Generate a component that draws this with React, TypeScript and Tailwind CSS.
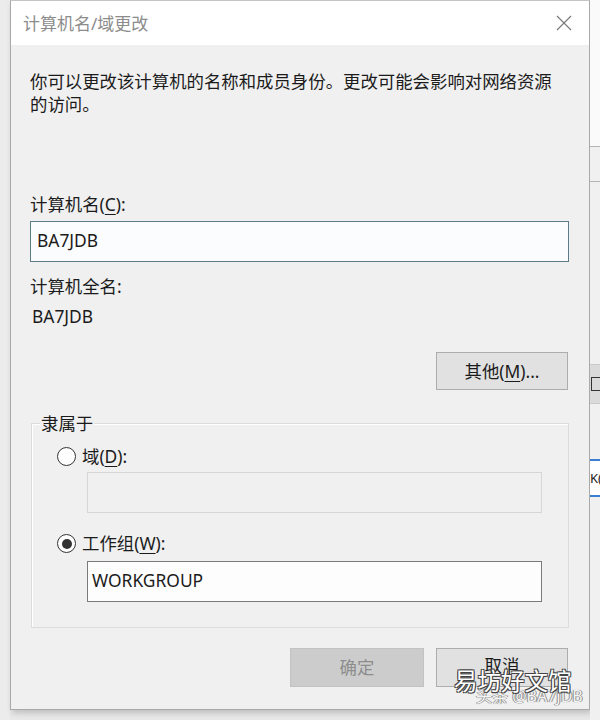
import React from 'react';

function Radio({ checked }: { checked?: boolean }) {
  return (
    <span className="w-[19px] h-[19px] rounded-full border-[1.5px] border-[#333333] bg-white flex items-center justify-center shrink-0">
      {checked && <span className="w-[10px] h-[10px] rounded-full bg-[#333333]" />}
    </span>
  );
}

export default function App() {
  return (
    <div className="relative w-[600px] h-[720px] overflow-hidden bg-[#e8e8e8] flex font-['Noto_Sans','Noto_Sans_CJK_SC',sans-serif] text-[#1b1b1b]">
      {/* left edge of the window behind */}
      <div className="w-[10px] shrink-0 bg-[#ececec]" />

      {/* dialog */}
      <div className="w-[580px] h-[710px] shrink-0 border border-[#a9a9a9] border-t-[#c4c4c4] bg-[#f0f0f0] shadow-[2px_3px_6px_rgba(0,0,0,0.18)] flex flex-col">
        {/* title bar */}
        <div className="h-[44px] bg-white flex items-center justify-between pl-[12px] pr-[17px]">
          <span className="text-[17px] leading-[23px] text-[#8c8c8c]">计算机名/域更改</span>
          <svg width="16" height="16" viewBox="0 0 16 16" className="text-[#777777]">
            <path d="M1 1 L15 15 M15 1 L1 15" stroke="currentColor" strokeWidth="1.1" fill="none" />
          </svg>
        </div>

        {/* body */}
        <div className="flex flex-col pl-[19px] pr-[20px] text-[17.4px] leading-[23px]">
          <p className="pt-[25px] whitespace-nowrap">
            你可以更改该计算机的名称和成员身份。更改可能会影响对网络资源
            <br />
            的访问。
          </p>

          <div className="mt-[77px]">
            计算机名(<u className="underline-offset-[3px]">C</u>):
          </div>
          <div className="mt-[5px] h-[41px] border border-[#5b7b86] bg-[#fbfcfd] flex items-center px-[6px] pb-[3px]">
            BA7JDB
          </div>

          <div className="mt-[13px]">计算机全名:</div>
          <div className="mt-[7px] pl-[2px]">BA7JDB</div>

          <div className="mt-[24px] flex justify-end">
            <button className="w-[132px] h-[38px] mr-[1px] bg-[#e1e1e1] border border-[#adadad] flex items-center justify-center">
              其他(<u className="underline-offset-[3px]">M</u>)...
            </button>
          </div>

          {/* group box */}
          <div className="relative mt-[33px] ml-[1px] h-[205px] border border-[#dcdcdc] shadow-[inset_1px_1px_0_#ffffff] pl-[25px] pr-[26px] pt-[21px]">
            <span className="absolute -top-[12px] left-[8px] bg-[#f0f0f0] px-[1px]">隶属于</span>

            <label className="flex items-center gap-[6px]">
              <Radio />
              <span>
                域(<u className="underline-offset-[3px]">D</u>):
              </span>
            </label>
            <div className="mt-[4px] ml-[30px] h-[41px] border border-[#d6d6d6] bg-[#f0f0f0]" />

            <label className="mt-[19px] flex items-center gap-[6px]">
              <Radio checked />
              <span>
                工作组(<u className="underline-offset-[3px]">W</u>):
              </span>
            </label>
            <div className="mt-[6px] ml-[30px] h-[41px] border border-[#7a7a7a] bg-[#fdfdfd] flex items-center px-[4px] pb-[3px]">
              WORKGROUP
            </div>
          </div>

          <div className="mt-[20px] flex justify-end gap-[12px]">
            <button className="w-[134px] h-[39px] bg-[#cccccc] border border-[#c2c2c2] text-[#8d8d8d]">确定</button>
            <button className="w-[132px] h-[39px] mr-[1px] bg-[#e1e1e1] border border-[#adadad] pb-[4px]">取消</button>
          </div>
        </div>
      </div>

      {/* right edge of the window behind */}
      <div className="flex-1 flex flex-col bg-[#f0f0f0] text-[15px] leading-[20px]">
        <div className="h-[147px] bg-[#fafafa] border-b border-[#b5b5b5]" />
        <div className="h-[35px] border-b border-[#b5b5b5]" />
        <div className="mt-[182px] h-[40px] bg-[#dadada] border-y border-[#c9c9c9] flex items-center overflow-hidden">
          <span className="ml-[1px] w-[10px] h-[14px] border border-[#333333] border-r-0" />
        </div>
        <div className="mt-[55px] h-[38px] border-y-2 border-[#3b7fd2] bg-white flex items-center overflow-hidden whitespace-nowrap text-[#222222] text-[13px]">
          K(
        </div>
      </div>

      {/* watermark */}
      <div className="absolute left-[476px] top-[686px] text-[16px] leading-[20px] text-[#f4f4f4] [text-shadow:0_0_1px_#777777,1px_0_0_#9a9a9a,-1px_0_0_#9a9a9a] whitespace-nowrap">
        头条 @BA7JDB
      </div>
      <div className="absolute left-[454px] top-[666px] text-[23.5px] leading-[30px] text-white [text-shadow:1px_1px_0_#444444,-1px_-1px_0_#444444,1px_-1px_0_#444444,-1px_1px_0_#444444] whitespace-nowrap">
        易坊好文馆
      </div>
    </div>
  );
}
